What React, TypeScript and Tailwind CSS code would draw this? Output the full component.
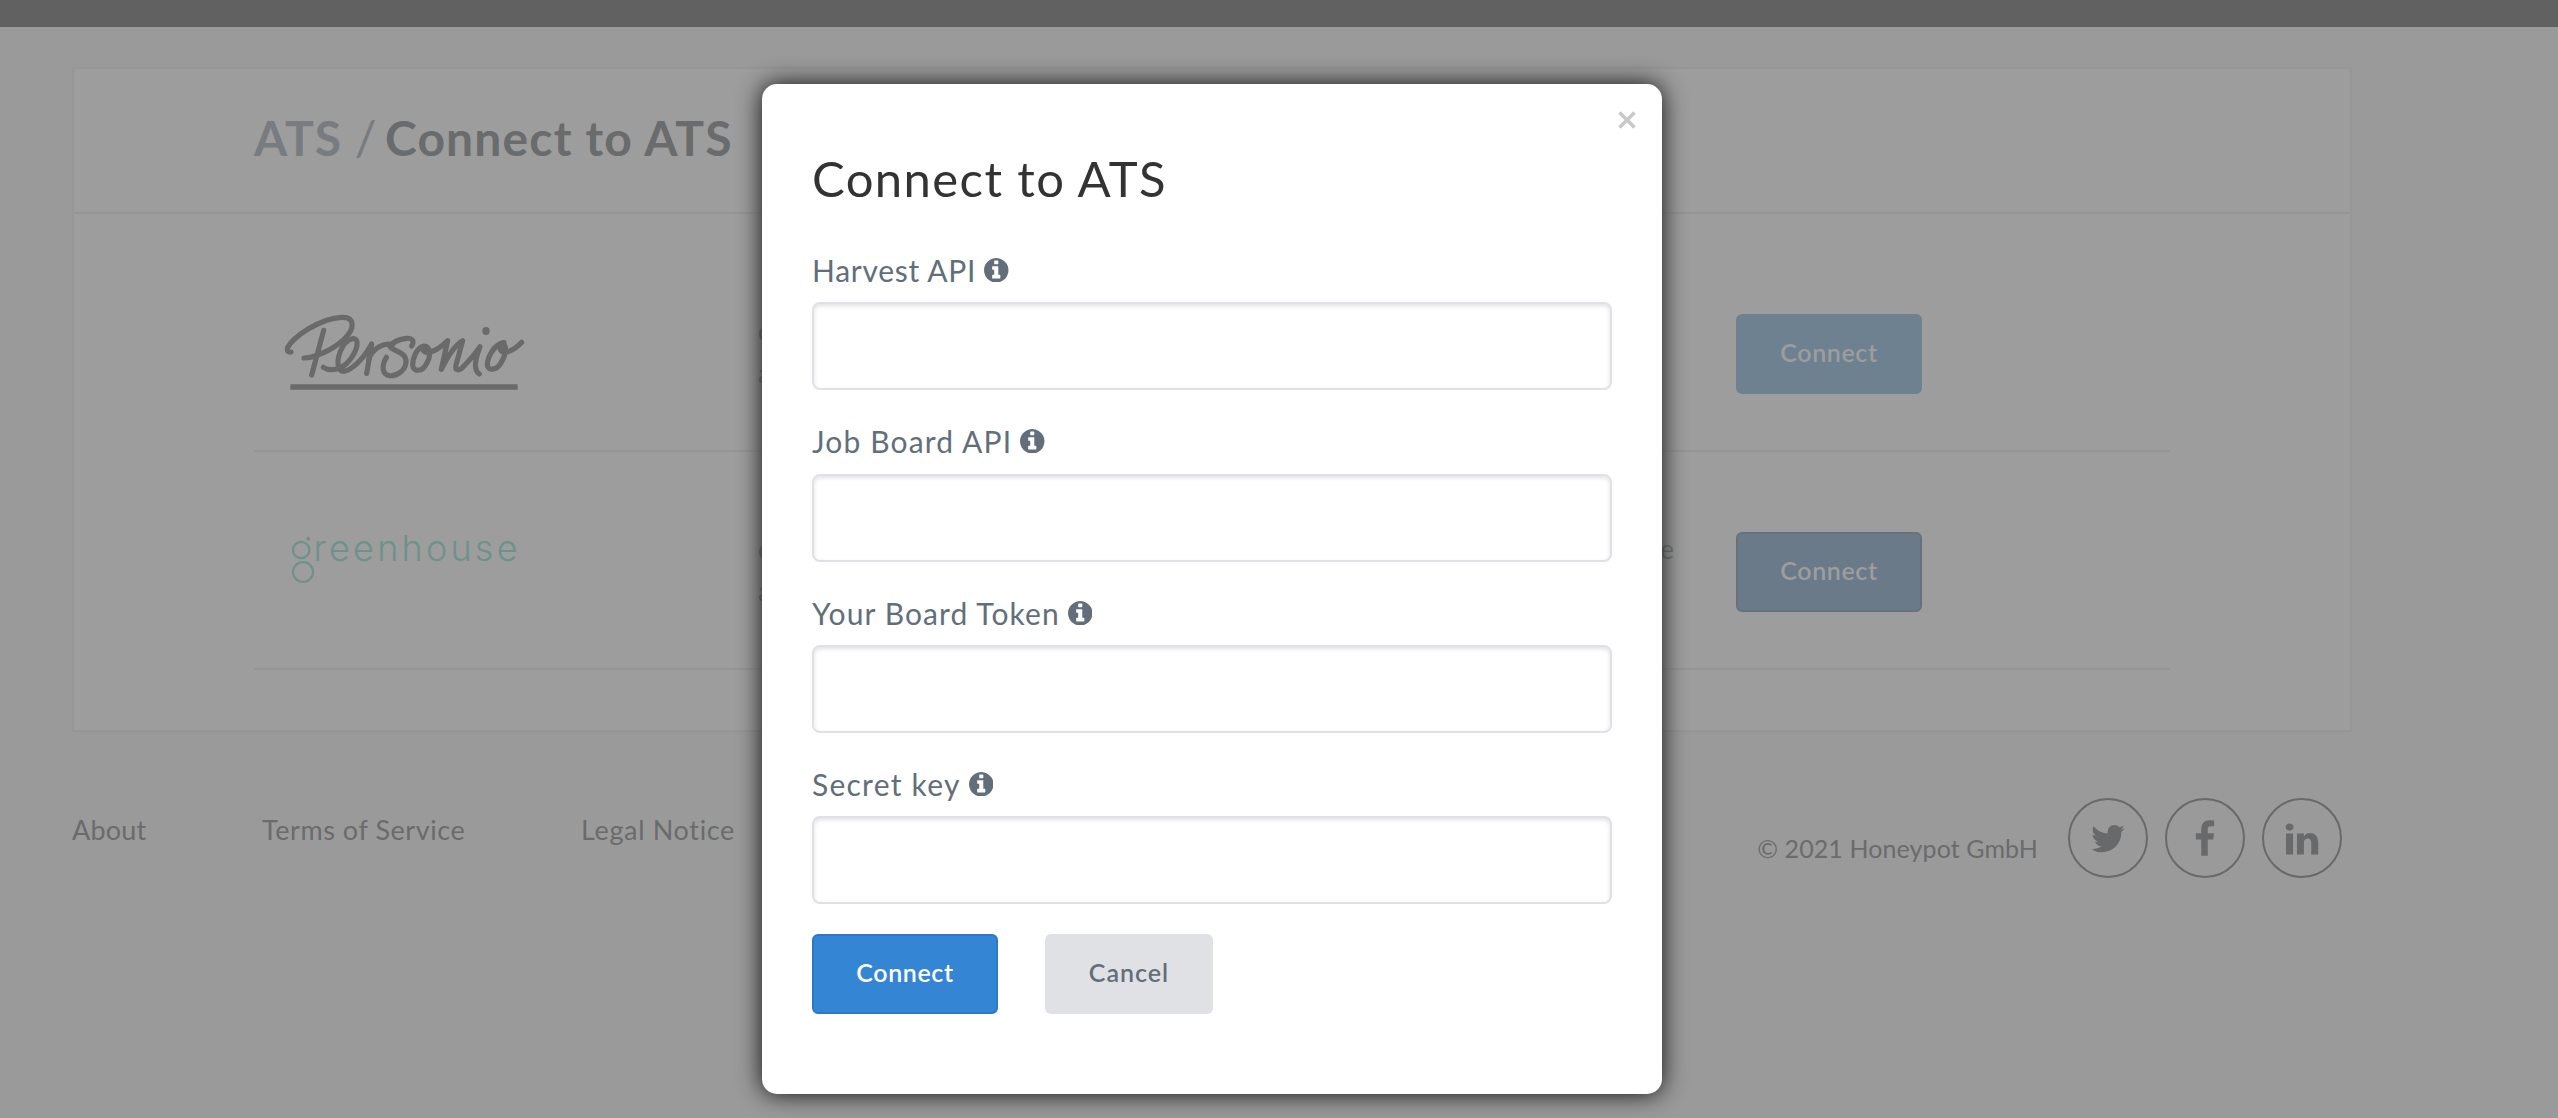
import type { ReactNode } from 'react'

const fields = [
  { label: 'Harvest API', tracking: 'tracking-[0.7px]', gap: '', pad: 'mb-[14px]' },
  { label: 'Job Board API', tracking: 'tracking-[1.15px]', gap: 'mt-[33px]', pad: 'mb-[15px]' },
  { label: 'Your Board Token', tracking: 'tracking-[1.1px]', gap: 'mt-[33px]', pad: 'mb-[14px]' },
  { label: 'Secret key', tracking: 'tracking-[1.25px]', gap: 'mt-[33px]', pad: 'mb-[14px]' },
]

function InfoIcon() {
  return (
    <svg width="24.5" height="24.5" viewBox="128 128 1536 1536" fill="currentColor">
      <path d="M1152 1376v-160q0-14-9-23t-23-9h-96v-512q0-14-9-23t-23-9h-320q-14 0-23 9t-9 23v160q0 14 9 23t23 9h96v320h-96q-14 0-23 9t-9 23v160q0 14 9 23t23 9h448q14 0 23-9t9-23zM1024 480v-160q0-14-9-23t-23-9h-192q-14 0-23 9t-9 23v160q0 14 9 23t23 9h192q14 0 23-9t9-23zM1664 896q0 209-103 385.5t-279.5 279.5-385.5 103-385.5-103-279.5-279.5-103-385.5 103-385.5 279.5-279.5 385.5-103 385.5 103 279.5 279.5 103 385.5z" />
    </svg>
  )
}

function PersonioLogo() {
  return (
    <svg width="260" height="100" viewBox="0 0 780 300" fill="none" stroke="#6a6a6a" strokeWidth="15.5" strokeLinecap="round" strokeLinejoin="round" aria-label="Personio">
      <path d="M33 156Q20 158 22 144C40 110 120 55 185 52C225 50 225 85 195 115C160 150 100 175 72 174" />
      <path d="M131 91L95 225" />
      <path d="M130 202C150 215 185 210 205 185C235 150 240 112 217 116C187 122 165 180 178 205C190 232 242 192 275 132L260 220" />
      <path d="M266 178C280 142 312 128 338 134" />
      <path d="M395 138C405 122 395 113 380 115C355 118 335 128 330 140C340 154 380 155 378 187C376 212 350 229 328 227C305 224 305 195 319 172" />
      <path d="M432 138C410 142 398 175 398 195C400 217 427 217 440 190C455 165 450 138 432 138C420 150 438 165 460 153C480 145 495 130 503 122L484 208C505 165 525 135 548 122L528 195C524 212 535 212 545 205C570 180 590 155 600 140C596 150 584 185 587 202C588 215 593 218 598 222" />
      <path d="M672 128C645 130 622 170 622 195C624 215 650 210 662 190C678 165 682 140 668 128C650 145 665 162 685 155C700 150 715 138 725 127" />
      <ellipse cx="618" cy="93" rx="11" ry="12" fill="#6a6a6a" stroke="none" />
      <path d="M31 261H713" strokeLinecap="butt" strokeWidth="16" />
    </svg>
  )
}

function GreenhouseLogo() {
  return (
    <svg width="260" height="60" viewBox="0 0 260 60" fill="none" stroke="#6f918b" strokeWidth="2.2" aria-label="greenhouse">
      <circle cx="21.2" cy="20" r="8.2" />
      <circle cx="23" cy="42" r="10" />
      <circle cx="28.2" cy="8.8" r="2" fill="#6f918b" stroke="none" />
      <text x="33.5" y="30.6" fontFamily="Inter" fontSize="36" fontWeight="300" fill="#6f918b" stroke="none" textLength="204" lengthAdjust="spacing">
        reenhouse
      </text>
    </svg>
  )
}

function AtsRow({ logo, end, button }: { logo: ReactNode; end: string; button: string }) {
  return (
    <div className="flex h-[218px] items-start border-b-2 border-[#969696]">
      <div className="w-[504px] pl-[26px]">{logo}</div>
      <div className="mt-[76px] flex w-[978px] justify-between pr-[62px] text-[26px] leading-[42px] text-[#7c7e80]">
        <div>
          c<br />a
        </div>
        <div>{end}</div>
      </div>
      <button className={`mt-[80px] h-[80px] w-[186px] rounded-[6px] border-2 pb-[3px] text-[25px] font-semibold tracking-[0.6px] text-[#9d9d9d] ${button}`}>Connect</button>
    </div>
  )
}

function Social({ box, d }: { box: string; d: string }) {
  return (
    <div className="flex size-[80px] items-center justify-center rounded-full border-2 border-[#68696a] text-[#68696a]">
      <svg width="38" height="38" viewBox={box} fill="currentColor">
        <path d={d} />
      </svg>
    </div>
  )
}

export default function App() {
  return (
    <div className="relative h-[1118px] w-[2558px] overflow-hidden bg-[#9a9a9a] font-['Lato',sans-serif]">
      <div className="h-[27px] bg-[#616161]" />
      <main className="mt-[40px] ml-[72px] h-[665px] w-[2280px] border-2 border-[#969696] bg-[#9d9d9d]">
        <h1 className="flex h-[145px] items-center border-b-2 border-[#969696] pb-[6px] pl-[180px] text-[48px] font-bold text-[#6a6b6c]">
          <span className="w-[131px] font-bold tracking-[1px] whitespace-nowrap text-[#787c80]">
            ATS <span className="font-normal">/</span>
          </span>
          <span className="tracking-[1.15px]">Connect to ATS</span>
        </h1>
        <div className="mx-[180px] pt-[20px]">
          <AtsRow logo={<div className="pt-[66px]"><PersonioLogo /></div>} end="" button="border-[#6e8191] bg-[#6e8191]" />
          <AtsRow logo={<div className="pt-[78px]"><GreenhouseLogo /></div>} end="e" button="border-[#67717b] bg-[#6a7a89]" />
        </div>
      </main>
      <footer className="flex items-start pr-[216px] pl-[72px] text-[27px] text-[#6a6b6c]">
        <span className="mt-[78px] w-[190px] tracking-[0.2px]">About</span>
        <span className="mt-[78px] w-[319px] tracking-[0.55px]">Terms of Service</span>
        <span className="mt-[78px] tracking-[0.65px]">Legal Notice</span>
        <span className="mt-[98px] mr-[30px] ml-auto text-[25px] tracking-[0.1px]">© 2021 Honeypot GmbH</span>
        <div className="mt-[66px] flex gap-[17px]">
          <Social
            box="0 -32 1792 1792"
            d="M1684 408q-67 98-162 167 1 14 1 42 0 130-38 259.5t-115.5 248.5-184.5 210.5-258 146-323 54.5q-271 0-496-145 35 4 78 4 225 0 401-138-105-2-188-64.5t-114-159.5q33 5 61 5 43 0 85-11-112-23-185.5-111.5t-73.5-205.5v-4q68 38 146 41-66-44-105-115t-39-154q0-88 44-163 121 149 294.5 238.5t371.5 99.5q-8-38-8-74 0-134 94.5-228.5t228.5-94.5q140 0 236 102 109-21 205-78-37 115-142 178 93-10 186-50z"
          />
          <Social
            box="15 -64 1792 1792"
            d="M1343 12v264h-157q-86 0-116 36t-30 108v189h293l-39 296h-254v759h-306v-759h-255v-296h255v-218q0-186 104-288.5t277-102.5q147 0 228 12z"
          />
          <Social
            box="-125 -60 1792 1792"
            d="M349 625v991h-330v-991h330zm21-306q1 73-50.5 122t-135.5 49h-2q-82 0-132-49t-50-122q0-74 51.5-122.5t134.5-48.5 133 48.5 51 122.5zm1166 729v568h-329v-530q0-105-40.5-164.5t-126.5-59.5q-63 0-105.5 34.5t-63.5 85.5q-11 30-11 81v553h-329q2-399 2-647t-1-296l-1-48h329v144h-2q20-32 41-56t56.5-52 87-43.5 114.5-15.5q171 0 275 113.5t104 332.5z"
          />
        </div>
      </footer>

      <div role="dialog" className="absolute top-[84px] left-[762px] h-[1010px] w-[900px] rounded-[15px] bg-white px-[50px] pt-[64px] shadow-[0_0_25px_rgba(0,0,0,0.9)]">
        <button className="absolute top-[26px] right-[25px] flex size-[20px] items-center justify-center text-[#c8c8c8]" aria-label="Close">
          <svg width="18" height="18" viewBox="0 0 18 18" stroke="currentColor" strokeWidth="3.6">
            <path d="M1.5 1.5L16.5 16.5M16.5 1.5L1.5 16.5" />
          </svg>
        </button>
        <h2 className="mb-[44px] h-[60px] text-[49px] leading-[60px] tracking-[1.4px] text-[#333]">Connect to ATS</h2>
        {fields.map((f) => (
          <div key={f.label} className={f.gap}>
            <label className={`flex h-[36px] items-center gap-[8px] text-[30px] leading-[36px] text-[#626e7a] ${f.pad}`}>
              <span className={f.tracking}>{f.label}</span>
              <InfoIcon />
            </label>
            <input className="block h-[88px] w-full rounded-[8px] border-2 border-[#e0e1e6] bg-white px-4 text-[30px] shadow-[inset_0_2px_4px_rgba(0,0,0,0.12)]" />
          </div>
        ))}
        <div className="mt-[30px] flex gap-[47px]">
          <button className="h-[80px] w-[186px] rounded-[6px] border-2 border-[#2a78c6] bg-[#3585d5] pb-[3px] text-[25px] font-semibold tracking-[0.6px] text-white">Connect</button>
          <button className="h-[80px] w-[168px] rounded-[6px] bg-[#e0e1e5] pb-[2px] text-[25px] font-semibold tracking-[1px] text-[#626e7a]">Cancel</button>
        </div>
      </div>
    </div>
  )
}
